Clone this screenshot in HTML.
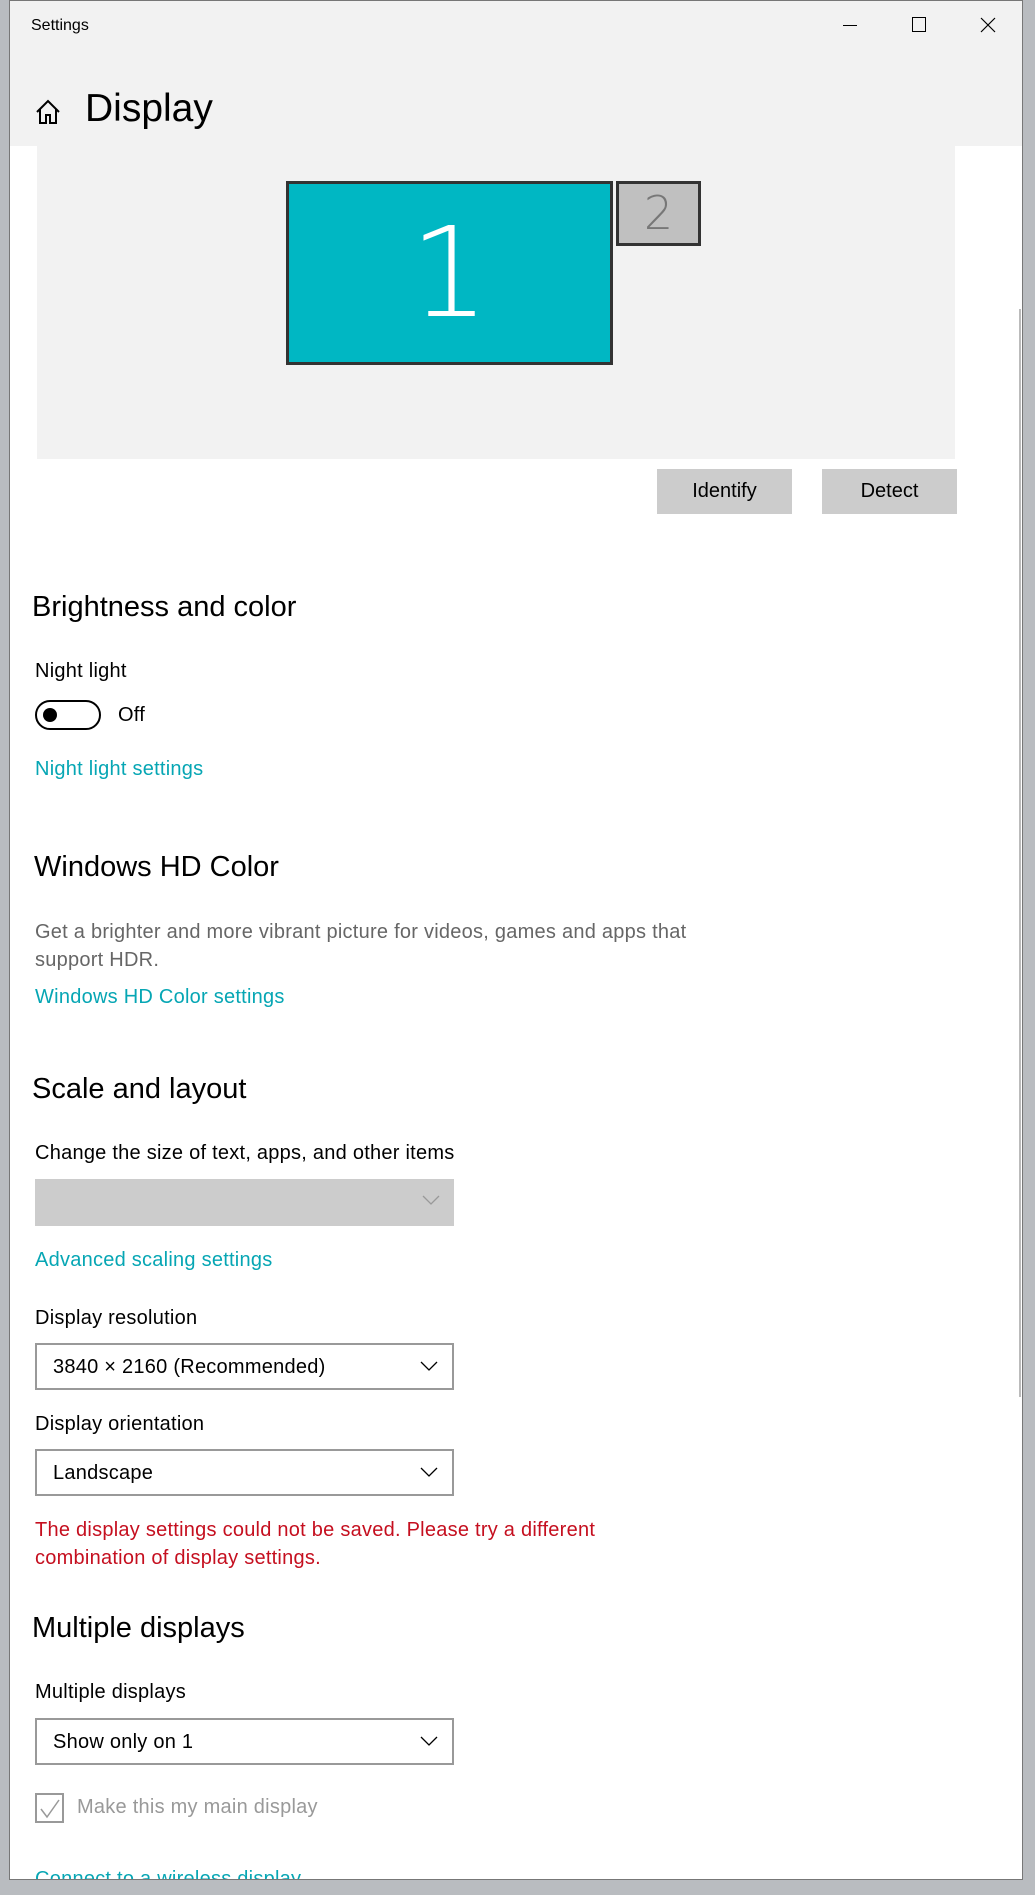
<!DOCTYPE html>
<html><head><meta charset="utf-8"><style>
*{margin:0;padding:0;box-sizing:border-box}
body{width:1035px;height:1895px;background:#b9bcc0;position:relative;overflow:hidden;font-family:"Liberation Sans",sans-serif;color:#000}
.win{position:absolute;left:9px;top:0;width:1014px;height:1880px;background:#fff;border:1px solid #777;overflow:hidden}
.a{position:absolute;white-space:nowrap}
.hdr{position:absolute;left:0;top:0;width:1014px;height:145px;background:#f2f2f2}
.t{font-size:20px;letter-spacing:0.25px}
.h{font-size:29px}
.lk{color:#06a6b4;font-size:20px;letter-spacing:0.25px}
.dd{position:absolute;left:25px;width:419px;height:47px;border:2px solid #999;background:#fff}
.dd span{position:absolute;left:16px;top:11px;font-size:20px;letter-spacing:0.25px}
.dd svg{position:absolute;right:14px;top:16px}
.btn{position:absolute;top:468px;width:135px;height:45px;background:#ccc;font-size:20px;text-align:center;line-height:45px}
</style></head><body>
<div class="win">
<div class="hdr"></div>
<div class="a" style="left:21px;top:16px;font-size:16px">Settings</div>
<div class="a" style="left:833px;top:24px;width:14px;height:1px;background:#000"></div>
<div class="a" style="left:902px;top:16px;width:14px;height:15px;border:1px solid #000"></div>
<svg class="a" style="left:970px;top:16px" width="16" height="16"><path d="M1 1L15 15M15 1L1 15" stroke="#000" stroke-width="1.2"/></svg>
<svg class="a" style="left:24px;top:97px" width="28" height="28" viewBox="0 0 28 28"><path d="M3 14L14 3L25 14M6 11V25H12V17H16V25H22V11" fill="none" stroke="#000" stroke-width="2"/></svg>
<div class="a" style="left:75px;top:86px;font-size:39px">Display</div>
<div class="a" style="left:27px;top:145px;width:918px;height:313px;background:#f2f2f2"></div>
<div class="a" style="left:276px;top:180px;width:327px;height:184px;background:#00b7c3;border:3px solid #333;color:#fff;font-size:125px;text-align:center;line-height:180px;font-family:'DejaVu Sans',sans-serif;font-weight:200">1</div>
<div class="a" style="left:606px;top:180px;width:85px;height:65px;background:#c0c0c0;border:3px solid #333;color:#777;font-size:46px;text-align:center;line-height:58px;font-weight:200;font-family:'DejaVu Sans',sans-serif">2</div>
<div class="btn" style="left:647px">Identify</div>
<div class="btn" style="left:812px">Detect</div>
<div class="a" style="left:1009px;top:308px;width:2px;height:1088px;background:#bbb"></div>
<div class="a h" style="left:22px;top:590px">Brightness and color</div>
<div class="a t" style="left:25px;top:659px">Night light</div>
<div class="a" style="left:25px;top:699px;width:66px;height:30px;border:2px solid #000;border-radius:15px"></div>
<div class="a" style="left:33px;top:707px;width:14px;height:14px;border-radius:7px;background:#000"></div>
<div class="a t" style="left:108px;top:703px">Off</div>
<div class="a lk" style="left:25px;top:757px">Night light settings</div>
<div class="a h" style="left:24px;top:850px">Windows HD Color</div>
<div class="a t" style="left:25px;top:920px;color:#666">Get a brighter and more vibrant picture for videos, games and apps that</div>
<div class="a t" style="left:25px;top:948px;color:#666">support HDR.</div>
<div class="a lk" style="left:25px;top:985px">Windows HD Color settings</div>
<div class="a h" style="left:22px;top:1072px">Scale and layout</div>
<div class="a t" style="left:25px;top:1141px">Change the size of text, apps, and other items</div>
<div class="a" style="left:25px;top:1178px;width:419px;height:47px;background:#ccc"><svg style="position:absolute;right:14px;top:16px" width="18" height="11"><path d="M1 1L9 9L17 1" fill="none" stroke="#999" stroke-width="1.3"/></svg></div>
<div class="a lk" style="left:25px;top:1248px">Advanced scaling settings</div>
<div class="a t" style="left:25px;top:1306px">Display resolution</div>
<div class="dd" style="top:1342px"><span>3840 × 2160 (Recommended)</span><svg width="18" height="11"><path d="M1 1L9 9L17 1" fill="none" stroke="#000" stroke-width="1.3"/></svg></div>
<div class="a t" style="left:25px;top:1412px">Display orientation</div>
<div class="dd" style="top:1448px"><span>Landscape</span><svg width="18" height="11"><path d="M1 1L9 9L17 1" fill="none" stroke="#000" stroke-width="1.3"/></svg></div>
<div class="a t" style="left:25px;top:1518px;color:#c50f1f">The display settings could not be saved. Please try a different</div>
<div class="a t" style="left:25px;top:1546px;color:#c50f1f">combination of display settings.</div>
<div class="a h" style="left:22px;top:1611px">Multiple displays</div>
<div class="a t" style="left:25px;top:1680px">Multiple displays</div>
<div class="dd" style="top:1717px"><span>Show only on 1</span><svg width="18" height="11"><path d="M1 1L9 9L17 1" fill="none" stroke="#000" stroke-width="1.3"/></svg></div>
<div class="a" style="left:25px;top:1792px;width:29px;height:30px;border:2px solid #999"><svg style="position:absolute;left:2px;top:3px" width="22" height="22"><path d="M2 11L8 19L20 2" fill="none" stroke="#999" stroke-width="1.5"/></svg></div>
<div class="a t" style="left:67px;top:1795px;color:#999">Make this my main display</div>
<div class="a lk" style="left:25px;top:1867px">Connect to a wireless display</div>
</div>
</body></html>
